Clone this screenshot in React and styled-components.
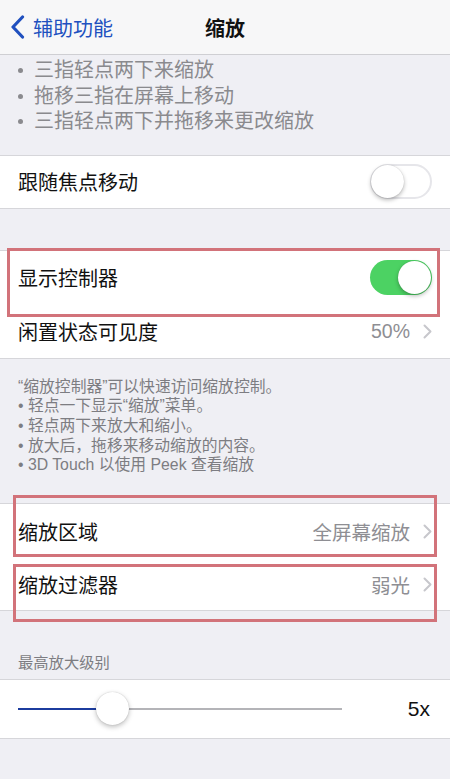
import styled, { createGlobalStyle } from 'styled-components';

const GlobalStyle = createGlobalStyle`
    html, body {
        margin: 0;
        padding: 0;
        background: #efeff4;
    }
    body {
        font-family: "Liberation Sans", "Noto Sans CJK SC", sans-serif;
        -webkit-font-smoothing: antialiased;
    }
`;

const Page = styled.div`
    width: 450px;
    height: 779px;
    overflow: hidden;
    background: #efeff4;
`;

const NavBar = styled.header`
    position: relative;
    display: flex;
    align-items: center;
    justify-content: center;
    height: 54px;
    background: #f7f7f8;
    border-bottom: 1px solid #cfcfd3;
`;

const BackButton = styled.div`
    position: absolute;
    left: 10px;
    top: 0;
    bottom: 0;
    display: flex;
    align-items: center;
    gap: 8px;
    color: #2050bf;
    font-size: 20px;
`;

const NavTitle = styled.h1`
    margin: 0;
    font-size: 20px;
    font-weight: 600;
    color: #111;
`;

const BulletList = styled.ul`
    list-style: none;
    margin: 0;
    padding: 3px 18px 20px 18px;
`;

const BulletItem = styled.li`
    display: flex;
    align-items: center;
    height: 25.5px;
    line-height: 25.5px;
    font-size: 20px;
    color: #8a8a8e;

    &::before {
        content: '';
        width: 5px;
        height: 5px;
        border-radius: 50%;
        background: #8a8a8e;
        margin-right: 11px;
    }
`;

const Section = styled.section`
    position: relative;
    background: #fff;
    border-top: 1px solid #d6d6da;
    border-bottom: 1px solid #d6d6da;
    margin-top: ${props => props.gap || 0}px;
`;

const Row = styled.div`
    position: relative;
    display: flex;
    align-items: center;
    justify-content: space-between;
    height: ${props => props.h || 53}px;
    padding: 0 18px;

    & + &::before {
        content: '';
        position: absolute;
        top: 0;
        left: 18px;
        right: 0;
        height: 1px;
        background: #dcdce0;
    }
`;

const Label = styled.span`
    font-size: 20px;
    color: #111;
`;

const Value = styled.span`
    display: flex;
    align-items: center;
    gap: 13px;
    font-size: 19.5px;
    color: #8e8e93;
`;

const Toggle = styled.div`
    position: relative;
    width: 62px;
    height: 35px;
    border-radius: 18px;
    box-sizing: border-box;
    background: ${props => (props.on ? '#4cd263' : '#fff')};
    border: ${props => (props.on ? 'none' : '2px solid #e6e6ea')};

    &::after {
        content: '';
        position: absolute;
        top: ${props => (props.on ? 1 : -1)}px;
        ${props => (props.on ? 'right: 1px;' : 'left: -1px;')}
        width: 33px;
        height: 33px;
        border-radius: 50%;
        background: #fff;
        box-shadow: 0 2px 4px rgba(0, 0, 0, 0.28), 0 0 1px rgba(0, 0, 0, 0.2);
    }
`;

const FooterNote = styled.div`
    padding: 18px 18px 28px;
    font-size: 15.8px;
    line-height: 19.7px;
    color: #7d7d82;
`;

const GroupHeader = styled.div`
    padding: 42px 18px 6px;
    font-size: 15.3px;
    line-height: 20px;
    color: #7d7d82;
`;

const SliderTrack = styled.div`
    position: relative;
    width: 324px;
    height: 2px;
    background: #b4b4b8;
`;

const SliderFill = styled.div`
    height: 100%;
    background: #1c3c9e;
`;

const SliderThumb = styled.div`
    position: absolute;
    top: -16px;
    width: 33px;
    height: 33px;
    margin-left: -17px;
    border-radius: 50%;
    background: #fff;
    box-shadow: 0 2px 5px rgba(0, 0, 0, 0.25), 0 0 1px rgba(0, 0, 0, 0.25);
`;

const SliderValue = styled.span`
    font-size: 21px;
    color: #111;
    padding-right: 2px;
`;

const Highlight = styled.div`
    position: absolute;
    top: ${props => props.top}px;
    left: ${props => props.left}px;
    right: ${props => props.right}px;
    height: ${props => props.h}px;
    border: 3px solid #d2737a;
    box-sizing: border-box;
    pointer-events: none;
`;

const BackChevron = () => (
    <svg width="15" height="24" viewBox="0 0 15 24">
        <path d="M12.5 2 L3 12 L12.5 22" fill="none" stroke="#2050bf" strokeWidth="3.2" strokeLinecap="round" strokeLinejoin="round" />
    </svg>
);

const Chevron = () => (
    <svg width="9" height="15" viewBox="0 0 9 15">
        <path d="M1.5 1.5 L7.5 7.5 L1.5 13.5" fill="none" stroke="#c7c7cc" strokeWidth="2" strokeLinecap="round" strokeLinejoin="round" />
    </svg>
);

const gestures = ['三指轻点两下来缩放', '拖移三指在屏幕上移动', '三指轻点两下并拖移来更改缩放'];

const notes = [
    '“缩放控制器”可以快速访问缩放控制。',
    '• 轻点一下显示“缩放”菜单。',
    '• 轻点两下来放大和缩小。',
    '• 放大后，拖移来移动缩放的内容。',
    '• 3D Touch 以使用 Peek 查看缩放',
];

const sliderPercent = 29.3;

const App = () => (
    <Page>
        <GlobalStyle />
        <NavBar>
            <BackButton>
                <BackChevron />
                <span>辅助功能</span>
            </BackButton>
            <NavTitle>缩放</NavTitle>
        </NavBar>

        <BulletList>
            {gestures.map(g => <BulletItem key={g}>{g}</BulletItem>)}
        </BulletList>

        <Section>
            <Row h={52}>
                <Label>跟随焦点移动</Label>
                <Toggle />
            </Row>
        </Section>

        <Section gap={41}>
            <Row h={54}>
                <Label>显示控制器</Label>
                <Toggle on />
            </Row>
            <Row h={53}>
                <Label>闲置状态可见度</Label>
                <Value>50%<Chevron /></Value>
            </Row>
            <Highlight top={-3} left={7} right={10} h={69} />
        </Section>

        <FooterNote>
            {notes.map(n => <div key={n}>{n}</div>)}
        </FooterNote>

        <Section>
            <Row h={54}>
                <Label>缩放区域</Label>
                <Value>全屏幕缩放<Chevron /></Value>
            </Row>
            <Row h={52}>
                <Label>缩放过滤器</Label>
                <Value>弱光<Chevron /></Value>
            </Row>
            <Highlight top={-9} left={13} right={13} h={62} />
            <Highlight top={60} left={13} right={13} h={58} />
        </Section>

        <GroupHeader>最高放大级别</GroupHeader>

        <Section>
            <Row h={58}>
                <SliderTrack>
                    <SliderFill style={{ width: `${sliderPercent}%` }} />
                    <SliderThumb style={{ left: `${sliderPercent}%` }} />
                </SliderTrack>
                <SliderValue>5x</SliderValue>
            </Row>
        </Section>
    </Page>
);

export default App;
